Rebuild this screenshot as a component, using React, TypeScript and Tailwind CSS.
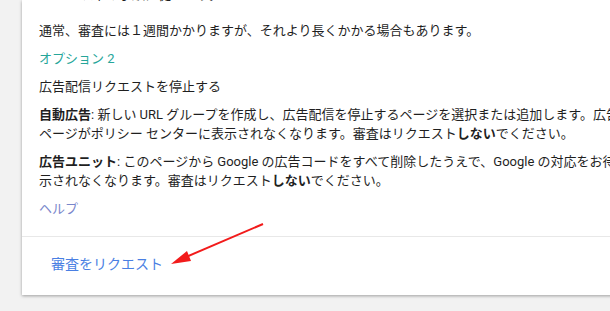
import React from 'react';

const font = { fontFamily: 'Roboto, "Noto Sans CJK JP", "Noto Sans", sans-serif' };

export default function App() {
  return (
    <div className="relative w-[610px] h-[311px] overflow-hidden bg-[#f2f2f2] pl-[22px] pb-[16px]" style={font}>
      {/* カード */}
      <div className="w-[640px] h-full bg-white shadow-[0_1px_3px_rgba(0,0,0,0.35)] flex flex-col text-[13px] leading-[19px] text-[#1f1f1f]">
        <div className="pl-[17px] pb-[18px] whitespace-nowrap">
          <p className="-mt-[15px] mb-[17px] pl-[41px]">以下の手順に従います。</p>
          <p className="mb-[9px]">通常、審査には１週間かかりますが、それより長くかかる場合もあります。</p>
          <p className="mb-[9px] text-[#26a69a]">オプション 2</p>
          <p className="mb-[9px]">広告配信リクエストを停止する</p>
          <p className="mb-[9px]">
            <b className="font-bold">自動広告</b>: 新しい URL グループを作成し、広告配信を停止するページを選択または追加します。広告配信を停止した
            <br />
            ページがポリシー センターに表示されなくなります。審査はリクエスト<b className="font-bold">しない</b>でください。
          </p>
          <p className="mb-[9px]">
            <b className="font-bold">広告ユニット</b>: このページから Google の広告コードをすべて削除したうえで、Google の対応をお待ちください。ポリシー センターに表
            <br />
            示されなくなります。審査はリクエスト<b className="font-bold">しない</b>でください。
          </p>
          <p className="mt-[1px] text-[#7986cb]">ヘルプ</p>
        </div>
        <div className="border-t border-[#e8e8e8] pl-[17px] pt-[18px]">
          <button className="pl-[12px] text-[#4a7fe3] text-[14px] leading-[19px]">審査をリクエスト</button>
        </div>
      </div>

      {/* 赤い矢印 */}
      <svg className="absolute left-0 top-0 pointer-events-none" width="610" height="311">
        <line x1="263" y1="224" x2="186" y2="257" stroke="#f21b1b" strokeWidth="2" />
        <polygon points="171,264 187,251 191,261" fill="#f21b1b" />
      </svg>
    </div>
  );
}
